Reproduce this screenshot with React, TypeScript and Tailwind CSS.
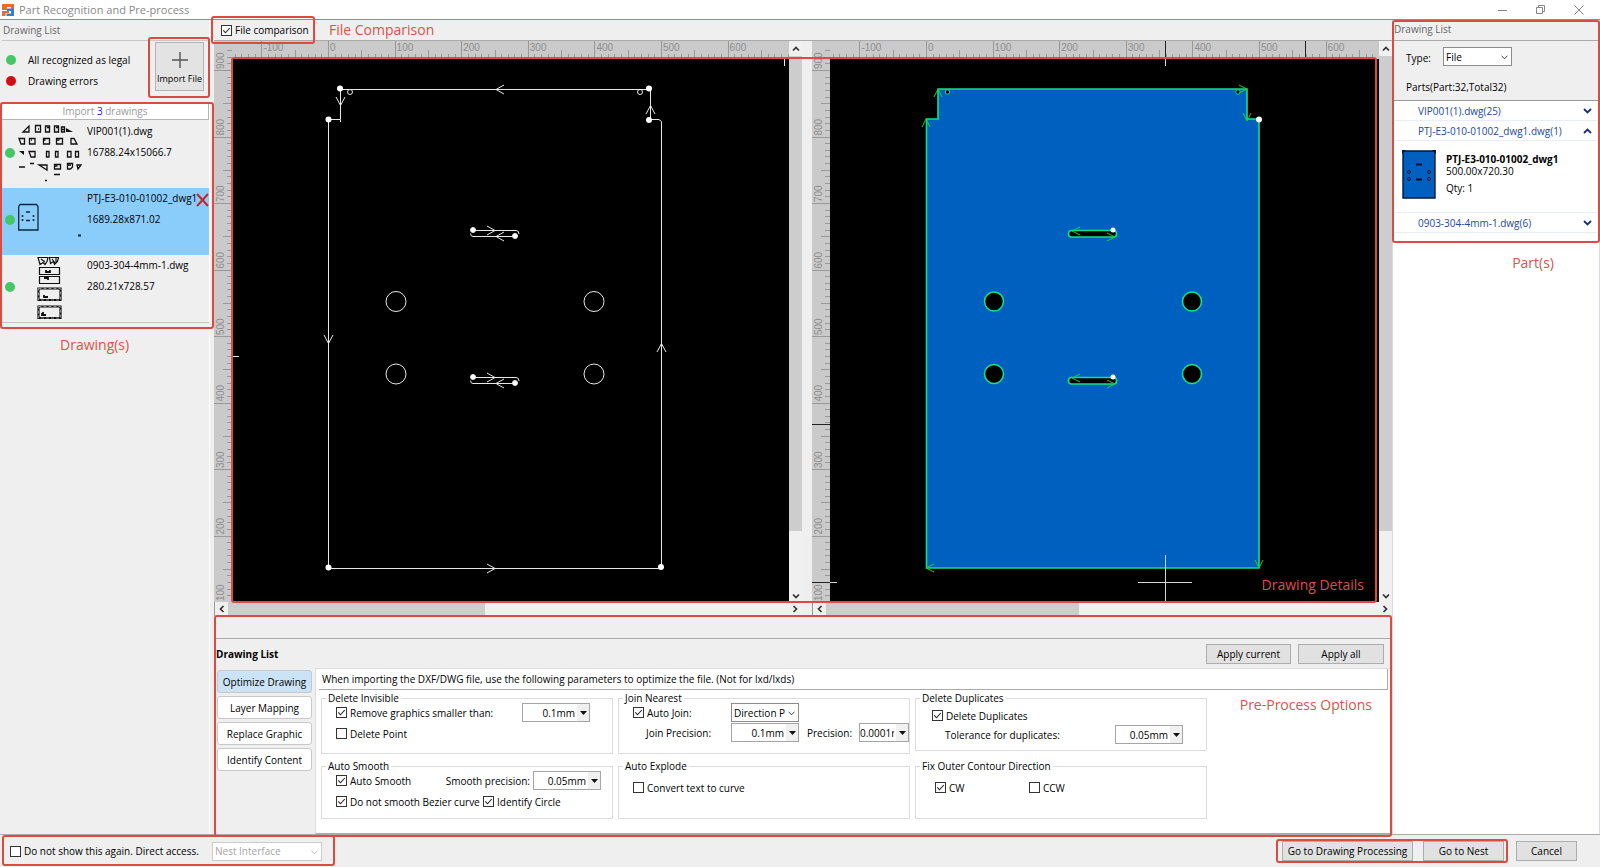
import type { ReactNode } from 'react';
import { useId, useState } from 'react';

const TICK_STEP = 66.6;

const tabs = ['Optimize Drawing', 'Layer Mapping', 'Replace Graphic', 'Identify Content'];

const drawings = [
  { name: 'VIP001(1).dwg', size: '16788.24x15066.7', thumb: <VipThumb /> },
  { name: 'PTJ-E3-010-01002_dwg1', size: '1689.28x871.02', thumb: <PlateThumb />, selected: true },
  { name: '0903-304-4mm-1.dwg', size: '280.21x728.57', thumb: <SheetThumb /> },
];

/* ---------- small controls ---------- */

function Frame({ className }: { className: string }) {
  return <div className={`pointer-events-none absolute z-20 rounded-[3px] border-2 border-[#dc4b41] ${className}`} />;
}

function Note({ className, children }: { className: string; children: ReactNode }) {
  return <span className={`absolute z-10 text-sm leading-5 whitespace-nowrap text-[#d9534a] ${className}`}>{children}</span>;
}

function Check({ label, checked = false, className = '' }: { label: string; checked?: boolean; className?: string }) {
  const id = useId();
  return (
    <span className={`flex items-center gap-[3px] whitespace-nowrap ${className}`}>
      <span className="relative flex">
        <input
          id={id}
          type="checkbox"
          defaultChecked={checked}
          className="peer size-[11px] appearance-none border border-[#333] bg-white"
        />
        <svg viewBox="0 0 11 11" className="pointer-events-none absolute inset-0 hidden size-[11px] peer-checked:block">
          <path d="M2.3 5.4 4.5 7.8 8.8 3" fill="none" stroke="#222" strokeWidth="1.1" />
        </svg>
      </span>
      <label htmlFor={id}>{label}</label>
    </span>
  );
}

function Combo({ value, label, className = '' }: { value: string; label: string; className?: string }) {
  return (
    <span className={`relative flex h-[19px] ${className}`}>
      <select
        aria-label={label}
        className="h-full w-full appearance-none border border-[#a5a5a5] bg-white pr-[14px] text-right leading-4"
      >
        <option>{value}</option>
      </select>
      <span className="pointer-events-none absolute inset-y-px right-px flex w-[12px] items-center justify-center bg-[#f0f0f0]">
        <svg width="7" height="4" viewBox="0 0 7 4">
          <path d="M0 0h7L3.5 4z" fill="#111" />
        </svg>
      </span>
    </span>
  );
}

function DropDown({
  id,
  value,
  label,
  disabled = false,
  className = '',
}: {
  id?: string;
  value: string;
  label?: string;
  disabled?: boolean;
  className?: string;
}) {
  return (
    <span className={`relative flex h-[19px] ${className}`}>
      <select
        id={id}
        aria-label={label}
        disabled={disabled}
        className="h-full w-full appearance-none border border-[#8c8c8c] bg-white pl-[2px] leading-4 disabled:border-[#ccc] disabled:text-[#a5a5a5] disabled:opacity-100"
      >
        <option>{value}</option>
      </select>
      <svg
        width="7"
        height="5"
        viewBox="0 0 7 5"
        className={`pointer-events-none absolute top-[8px] right-[4px] ${disabled ? 'text-[#bbb]' : 'text-[#444]'}`}
      >
        <path d="M.5.7 3.5 3.8 6.5.7" fill="none" stroke="currentColor" />
      </svg>
    </span>
  );
}

function PushButton({ children, className = '' }: { children: ReactNode; className?: string }) {
  return (
    <button type="button" className={`h-5 border border-[#adadad] bg-[#e1e1e1] text-center leading-4 whitespace-nowrap ${className}`}>
      {children}
    </button>
  );
}

function Group({ title, className = '', children }: { title: string; className?: string; children: ReactNode }) {
  return (
    <fieldset className={`border border-[#dcdcdc] ${className}`}>
      <legend className="ml-1 h-[10px] px-[2px] leading-[10px]">{title}</legend>
      {children}
    </fieldset>
  );
}

/* ---------- thumbnails ---------- */

function VipThumb() {
  return (
    <svg width="64" height="60" fill="none" stroke="#111" strokeWidth="1.3">
      <path d="M5 9h6V3zM17.500 2.500h5V9h-5zM27.500 3h4v6h-4zM36.500 3h4v6h-4zM43.500 4h3v5h-3z" />
      <path d="M20 6h1M29 4.500h2M38 4.500h2M43 6.500h4" />
      <path d="M48 5v4h7z" fill="#111" stroke="none" />
      <path d="M1 15.500h5.500V21H3zM11.500 15.500h5.500V21h-5.500zM25.500 15.500h6V21h-6zM38.500 15.500h6V21h-6zM53 15.500h3l3 5.500h-6z" />
      <path d="M25.500 17h2M38.500 17h3M13 17h1" />
      <path d="M1 28h5v4z" fill="#111" stroke="none" />
      <path d="M11 28.500h6V34h-4zM28.500 28.500h2.500V34h-2.500zM37.500 28.500h2.500V34h-2.500zM49.500 28.500h3.500V34h-3.500zM57.500 28.500h3V34h-3z" />
      <path d="M1 44h6M12 40.500h4M21 42h8v5zM36.500 41.500h6V46h-6zM49.500 40.500h5V44l-2 2h-3zM59 42h4l-3 4zM36 51.500h6" />
      <path d="M36.500 43h3M50 42h3M27 57.500h2" />
    </svg>
  );
}

function PlateThumb() {
  return (
    <svg width="64" height="60" fill="none" stroke="#0d2740" strokeWidth="1.3">
      <path d="M2 14.500h16.500l1.500 2V40H.7V16.500z" />
      <path d="M8 22h4M8 30.500h4M4.500 25v2M4.500 29v2M15.500 25v2M15.500 29v2" strokeWidth="1.6" />
      <path d="M60 45.500h3" strokeWidth="2" />
    </svg>
  );
}

function SheetThumb() {
  return (
    <svg width="64" height="64" fill="none" stroke="#111" strokeWidth="1.2">
      <path d="M20 .5h10l-1 4-2 3-2-2-3 2zM31.500.5h9l-1 4-3 3-1-3-3 2zM23 2l4 3M34 2l3 4M38 1v5" />
      <path d="M21.500 10.500h20v7h-20zM21.500 19.500h20v7h-20z" />
      <path d="M28 13v2h4v-2M26 21h4v2" strokeWidth="1.800" />
      <path d="M20.500 31.500h22v11.500h-22zM20.500 49.500h22V61h-22z" strokeWidth="2.200" />
      <path d="M20.500 31.500h22v11.500h-22zM20.500 49.500h22V61h-22z" stroke="#bbb" strokeWidth=".7" strokeDasharray="3 2" />
      <path d="M26 38v2h4M24 56v2h4M25 55v4" strokeWidth="1.800" />
    </svg>
  );
}

/* ---------- viewer ---------- */

function TopRuler({ zero, marks = [] }: { zero: number; marks?: number[] }) {
  const ticks = Array.from({ length: 84 }, (_, i) => i - 14);
  return (
    <svg className="h-[18px] w-full bg-[#cacaca] font-['Liberation_Sans',sans-serif] text-[10px]" stroke="#999">
      {ticks.map((t) => {
        const x = Math.round(zero + (t * TICK_STEP) / 10) + 0.5;
        const top = t % 10 === 0 ? 0 : t % 5 === 0 ? 9 : 13;
        return <path key={t} d={`M${x} ${top}V18`} />;
      })}
      {[-100, 0, 100, 200, 300, 400, 500, 600].map((n) => (
        <text key={n} x={zero + (n * TICK_STEP) / 100 + 2} y="10" fill="#8e8e8e" stroke="none">
          {n}
        </text>
      ))}
      {marks.map((x) => (
        <path key={x} d={`M${x} 0V18`} stroke="#222" />
      ))}
    </svg>
  );
}

function SideRuler({ marks = [] }: { marks?: number[] }) {
  const ticks = Array.from({ length: 84 }, (_, i) => i - 3);
  return (
    <svg className="w-[18px] shrink-0 self-stretch bg-[#cacaca] font-['Liberation_Sans',sans-serif] text-[10px]" stroke="#999">
      {ticks.map((t) => {
        const y = Math.round(29 + (t * 66.5) / 10) + 0.5;
        const left = t % 10 === 0 ? 0 : t % 5 === 0 ? 9 : 13;
        return <path key={t} d={`M${left} ${y}H18`} />;
      })}
      {[900, 800, 700, 600, 500, 400, 300, 200, 100].map((n, i) => (
        <text key={n} transform={`translate(10 ${28 + i * 66.5}) rotate(-90)`} fill="#8e8e8e" stroke="none">
          {n}
        </text>
      ))}
      {marks.map((y) => (
        <path key={y} d={`M0 ${y}H18`} stroke="#222" />
      ))}
    </svg>
  );
}

function ScrollArrow({ d, label, className }: { d: string; label: string; className: string }) {
  return (
    <button type="button" aria-label={label} className={`flex shrink-0 items-center justify-center ${className}`}>
      <svg width="8" height="8" viewBox="0 0 8 8">
        <path d={d} fill="none" stroke="#333" strokeWidth="1.7" />
      </svg>
    </button>
  );
}

function Viewer({
  zero,
  topMarks,
  sideMarks,
  children,
}: {
  zero: number;
  topMarks?: number[];
  sideMarks?: number[];
  children: ReactNode;
}) {
  return (
    <div className="flex min-w-0 flex-col">
      <div className="flex min-h-[400px] flex-1">
        <SideRuler marks={sideMarks} />
        <div className="flex min-w-0 flex-1 flex-col">
          <TopRuler zero={zero} marks={topMarks} />
          <svg className="w-full flex-1 bg-black">{children}</svg>
        </div>
        <div className="flex w-[13px] flex-col bg-[#f0f0f0]">
          <ScrollArrow label="Scroll up" d="M1 5.500 4 2.500 7 5.500" className="h-[15px]" />
          <div className="flex-1">
            <div className="h-[89%] bg-[#cdcdcd]" />
          </div>
          <ScrollArrow label="Scroll down" d="M1 2.500 4 5.500 7 2.500" className="h-[12px]" />
        </div>
      </div>
      <div className="flex h-[14px] border-l border-[#999] bg-[#f0f0f0]">
        <ScrollArrow label="Scroll left" d="M5.500 1 2.500 4 5.500 7" className="w-[13px]" />
        <div className="flex-1">
          <div className="h-full w-[46%] bg-[#cdcdcd]" />
        </div>
        <ScrollArrow label="Scroll right" d="M2.500 1 5.500 4 2.500 7" className="w-[15px]" />
      </div>
    </div>
  );
}

function RawDrawing() {
  return (
    <g fill="none" stroke="#e8e8e8">
      <path d="M96.500 509V60.500H108.500V63M108.500 60V30.500H418.500V60.500H427l2.500 2V509.500H96.500" />
      <path d="M272 26l-8 4.500 8 4.500M104 38l4.500 8.500L113 38M414 55l4.500-8.500L423 55M92 276l4.500 8.500L101 276M425 293l4.500-8.500L434 293M255 505l8 4.500-8 4.500" />
      {[242.5, 315].map((y) => (
        <g key={y}>
          <circle cx="164" cy={y} r="10" />
          <circle cx="362" cy={y} r="10" />
        </g>
      ))}
      {[0, 147].map((dy) => (
        <g key={dy} transform={`translate(0 ${dy})`}>
          <path d="M241 171.500H284q3 0 3 3.500M284 177.500H241q-2.500 0-2.500-3" />
          <path d="M255 167l8 4.500-8 4.500M272 173l-8 4.500 8 4.500" />
          <circle cx="241" cy="171" r="2.500" fill="#fff" />
          <circle cx="283" cy="177" r="2.500" fill="#fff" />
        </g>
      ))}
      <circle cx="118" cy="33" r="2.500" />
      <circle cx="408" cy="33" r="2.500" />
      {[
        [108, 29.5],
        [96.5, 60.5],
        [417, 29.5],
        [417, 61],
        [96.5, 508.5],
        [429, 508],
      ].map(([cx, cy]) => (
        <circle key={`${cx}-${cy}`} cx={cx} cy={cy} r="3" fill="#fff" stroke="none" />
      ))}
      <path d="M552.500 0V7M0 297.500H7" />
    </g>
  );
}

function PartDrawing() {
  return (
    <g fill="none" stroke="#12e08a" strokeWidth="1.600">
      <path d="M96.500 509V60H108V30H417V60H429V509z" fill="#0060c0" />
      <g fill="#000">
        {[242.5, 315].map((y) => (
          <g key={y}>
            <circle cx="164" cy={y} r="9.500" />
            <circle cx="362" cy={y} r="9.500" />
          </g>
        ))}
        <circle cx="117.500" cy="33" r="2.200" strokeWidth="1" />
        <circle cx="408" cy="33" r="2.200" strokeWidth="1" />
      </g>
      {[0, 147].map((dy) => (
        <g key={dy} transform={`translate(0 ${dy})`}>
          <rect x="238.500" y="171.500" width="48" height="6.500" rx="3" fill="#000" />
          <path d="M250 168l-8 4 8 4M277 174l8 4-8 4" stroke="#22d32a" strokeWidth="1" />
          <circle cx="283" cy="171" r="2.500" fill="#fff" stroke="none" />
        </g>
      ))}
      <path
        d="M92 68l4-8 4 8M104 38l4-8 4 8M409 26l8 4-8 4M413 54l4 8 4-8M425 501l4 8 4-8M104 505l-8 4 8 4"
        stroke="#22d32a"
        strokeWidth="1"
      />
      <circle cx="429" cy="60.500" r="3" fill="#fff" stroke="none" />
      <path d="M335.500 496V543M308 523.500H362M335.500 0V7M0 523.500H7" stroke="#d5d5d5" strokeWidth="1" />
    </g>
  );
}

/* ---------- page parts ---------- */

function TitleBar() {
  return (
    <header className="flex h-5 items-center border-b border-[#5b9bc4] bg-white pr-4 pl-[2px]">
      <svg width="12" height="12" viewBox="0 0 12 12">
        <path d="M0 0h12v5H9V3H5v3H0z" fill="#f0682c" />
        <path d="M0 7h7v2H3.500v3H0z" fill="#f0682c" />
        <path d="M5 4.500h7V12H4.500V9.500H9V7H5z" fill="#2a86cc" />
      </svg>
      <h1 className="ml-[5px] flex-1 text-[11px] text-[#888]">Part Recognition and Pre-process</h1>
      <div className="flex gap-[28px]">
        <button type="button" aria-label="Minimize">
          <svg width="10" height="10" stroke="#888">
            <path d="M0 5.500h9" />
          </svg>
        </button>
        <button type="button" aria-label="Restore">
          <svg width="10" height="10" fill="none" stroke="#888">
            <path d="M.5 2.500h6v6h-6zM2.500 2V.5h6v6H7" />
          </svg>
        </button>
        <button type="button" aria-label="Close">
          <svg width="10" height="10" stroke="#888">
            <path d="M.5.5l9 9M9.500.5l-9 9" />
          </svg>
        </button>
      </div>
    </header>
  );
}

function DrawingSidebar() {
  return (
    <aside className="relative flex w-[210px] shrink-0 flex-col border-r border-white pl-[2px]">
      <h2 className="h-[21px] border-b border-[#c8c8c8] pl-px leading-5 text-[#666]">Drawing List</h2>
      <div className="relative flex h-[62px] justify-between">
        <ul className="pt-[8px] pl-1">
          <li className="flex h-[21px] items-center gap-3">
            <i className="size-[10px] rounded-full bg-[#45c766]" />
            All recognized as legal
          </li>
          <li className="flex h-[21px] items-center gap-3">
            <i className="size-[10px] rounded-full bg-[#d30d12]" />
            Drawing errors
          </li>
        </ul>
        <button
          type="button"
          className="mt-px mr-[5px] flex size-[49px] flex-col items-center justify-end border border-[#b4b4b4] bg-[#e3e3e3] pb-[4px] text-[9px] leading-[14px] whitespace-nowrap"
        >
          <svg width="16" height="16" stroke="#555" strokeWidth="1.400" className="mb-[4px]">
            <path d="M0 8h16M8 0v16" />
          </svg>
          Import File
        </button>
        <Frame className="-top-1 -right-px h-[61px] w-[62px]" />
      </div>
      <div className="h-[17px] border-r border-b border-[#b5b5b5] bg-white text-center leading-4 text-[#9a9a9a]">
        Import <span className="text-[#2424b8]">3</span> drawings
      </div>
      <ul className="border-b border-[#c4c4c4] pt-px">
        {drawings.map((d) => (
          <li key={d.name} className={`relative flex h-[67px] pl-[3px] ${d.selected ? 'bg-[#8acdfb]' : ''}`}>
            <i className="mt-[27px] size-[10px] shrink-0 rounded-full bg-[#45c766]" />
            <div className="ml-[3px] w-[67px] shrink-0 pt-[2px]">{d.thumb}</div>
            <div className="ml-[2px] whitespace-nowrap">
              <p className="h-[21px] leading-[21px]">{d.name}</p>
              <p className="h-[21px] leading-[21px]">{d.size}</p>
            </div>
            {d.selected && (
              <button type="button" aria-label="Remove drawing" className="absolute top-[5px] right-0">
                <svg width="13" height="14" stroke="#c92323" strokeWidth="2">
                  <path d="M1 1l11 12M12 1L1 13" />
                </svg>
              </button>
            )}
          </li>
        ))}
      </ul>
      <Frame className="top-[82px] -right-[5px] left-0 h-[227px]" />
      <Note className="top-[315px] left-[60px]">Drawing(s)</Note>
    </aside>
  );
}

function PartRow({ name, open = false }: { name: string; open?: boolean }) {
  return (
    <button
      type="button"
      aria-expanded={open}
      className="flex h-[20px] w-full items-center justify-between border-b border-[#e8eef5] pr-[7px] pl-[25px] text-[#24489c]"
    >
      {name}
      <svg width="9" height="6" viewBox="0 0 9 6" fill="none" stroke="#12307e" strokeWidth="1.800">
        <path d={open ? 'M1 5 4.500 1.500 8 5' : 'M1 1 4.500 4.500 8 1'} />
      </svg>
    </button>
  );
}

function PartSidebar() {
  return (
    <aside className="relative flex w-[208px] shrink-0 flex-col border-x border-[#d5dde2] bg-white">
      <div className="border-b border-[#999] bg-[#efefef]">
        <h2 className="h-[21px] border-b border-[#aaa] pl-px leading-[18px] text-[#666]">Drawing List</h2>
        <div className="flex items-center pt-[6px] pl-[13px]">
          <label htmlFor="part-type" className="w-[37px] pt-[3px]">
            Type:
          </label>
          <DropDown id="part-type" value="File" className="w-[69px]" />
        </div>
        <p className="pt-[13px] pb-[5px] pl-[13px] leading-4">Parts(Part:32,Total32)</p>
      </div>
      <PartRow name="VIP001(1).dwg(25)" />
      <PartRow name="PTJ-E3-010-01002_dwg1.dwg(1)" open />
      <div className="flex h-[72px] border-b border-[#e8eef5] pt-[9px] pl-[9px]">
        <svg width="34" height="49" viewBox="0 0 34 49">
          <path d="M1 1h32v47H1z" fill="#0060c0" stroke="#04183a" strokeWidth="1.400" />
          <path d="M0 0h4L0 4zM34 0h-4l4 4z" fill="#04183a" />
          <path d="M14 14.500h6M14 29.500h6" stroke="#021026" strokeWidth="2" />
          <g fill="none" stroke="#04183a">
            <circle cx="7" cy="22" r="1.500" />
            <circle cx="27" cy="22" r="1.500" />
            <circle cx="7" cy="29" r="1.500" />
            <circle cx="27" cy="29" r="1.500" />
          </g>
        </svg>
        <div className="ml-[10px] pt-[2px] whitespace-nowrap">
          <p className="leading-[14px] font-bold text-black">PTJ-E3-010-01002_dwg1</p>
          <p className="leading-[11px]">500.00x720.30</p>
          <p className="mt-[3px] leading-4">Qty: 1</p>
        </div>
      </div>
      <PartRow name="0903-304-4mm-1.dwg(6)" />
      <Frame className="top-0 -right-px -left-px h-[223px]" />
      <Note className="top-[233px] right-[45px]">Part(s)</Note>
    </aside>
  );
}

function OptionsPanel() {
  const [tab, setTab] = useState(tabs[0]);
  return (
    <section className="relative bg-[#efefef]">
      <div className="h-[23px] border-b border-[#aaa]" />
      <div className="flex h-[29px] items-center gap-[7px] pr-[8px] pl-[2px]">
        <h2 className="flex-1 font-bold text-black">Drawing List</h2>
        <PushButton className="w-[85px]">Apply current</PushButton>
        <PushButton className="w-[86px]">Apply all</PushButton>
      </div>
      <div className="flex">
        <nav className="flex w-[101px] flex-col gap-[3px] pt-[2px] pl-[3px]">
          {tabs.map((t) => (
            <button
              key={t}
              type="button"
              onClick={() => setTab(t)}
              className={`h-[23px] w-[95px] rounded-[3px] border border-[#c8c8c8] leading-4 whitespace-nowrap ${
                t === tab ? 'bg-[#cbe3f6]' : 'bg-white'
              }`}
            >
              {t}
            </button>
          ))}
        </nav>
        <div className="h-[166px] flex-1 border-t border-b border-l border-t-[#dcdcdc] border-b-[#aaa] border-l-[#dcdcdc] bg-white">
          <p className="mr-[4px] ml-[3px] h-[21px] border-r border-b border-[#aaa] pl-[3px] leading-5">
            When importing the DXF/DWG file, use the following parameters to optimize the file. (Not for lxd/lxds)
          </p>
          <div className="mt-[3px] ml-[5px] grid max-w-[886px] grid-cols-3 gap-x-[5px] gap-y-[7px]">
            <Group title="Delete Invisible" className="h-[61px]">
              <div className="flex h-[19px] items-center justify-between pr-[22px] pl-[14px]">
                <Check label="Remove graphics smaller than:" checked />
                <Combo label="Minimum graphic size" value="0.1mm" className="w-[68px]" />
              </div>
              <Check label="Delete Point" className="mt-[2px] h-[19px] pl-[14px]" />
            </Group>
            <Group title="Join Nearest" className="h-[61px]">
              <div className="flex h-[19px] items-center pl-[14px]">
                <Check label="Auto Join:" checked className="w-[98px]" />
                <DropDown label="Join mode" value="Direction P" className="w-[68px]" />
              </div>
              <div className="mt-px flex h-[19px] items-center pl-[27px]">
                <span className="w-[85px]">Join Precision:</span>
                <Combo label="Join Precision" value="0.1mm" className="w-[68px]" />
                <span className="ml-[8px] flex-1">Precision:</span>
                <Combo label="Precision" value="0.0001r" className="w-[50px]" />
              </div>
            </Group>
            <Group title="Delete Duplicates" className="h-[58px]">
              <Check label="Delete Duplicates" checked className="mt-[3px] h-[19px] pl-[16px]" />
              <div className="flex h-[19px] items-center justify-between pr-[23px] pl-[29px]">
                <span>Tolerance for duplicates:</span>
                <Combo label="Tolerance for duplicates" value="0.05mm" className="w-[68px]" />
              </div>
            </Group>
            <Group title="Auto Smooth" className="h-[58px]">
              <div className="flex h-[19px] items-center pr-[11px] pl-[14px]">
                <Check label="Auto Smooth" checked className="flex-1" />
                <span>Smooth precision:</span>
                <Combo label="Smooth precision" value="0.05mm" className="ml-[3px] w-[68px]" />
              </div>
              <div className="mt-[2px] flex h-[19px] items-center pl-[14px]">
                <Check label="Do not smooth Bezier curve" checked className="w-[147px]" />
                <Check label="Identify Circle" checked />
              </div>
            </Group>
            <Group title="Auto Explode" className="h-[58px]">
              <Check label="Convert text to curve" className="mt-[7px] h-[19px] pl-[14px]" />
            </Group>
            <Group title="Fix Outer Contour Direction" className="h-[58px]">
              <div className="mt-[7px] flex h-[19px] items-center pl-[19px]">
                <Check label="CW" checked className="w-[94px]" />
                <Check label="CCW" />
              </div>
            </Group>
          </div>
        </div>
      </div>
      <Note className="top-[79px] right-[20px]">Pre-Process Options</Note>
      <Frame className="-top-px right-0 -bottom-[3px] left-0" />
    </section>
  );
}

export default function App() {
  return (
    <div className="flex min-h-screen flex-col bg-[#efefef] font-['Open_Sans','Noto_Sans',sans-serif] text-[10px] leading-4 text-black">
      <TitleBar />
      <div className="flex flex-1">
        <DrawingSidebar />
        <main className="flex min-w-0 flex-1 flex-col pl-1">
          <div className="relative flex h-[21px] items-center border-b border-[#aaa] pl-[7px]">
            <Check label="File comparison" checked />
            <Frame className="-top-1 -left-[3px] h-7 w-[104px]" />
            <Note className="top-0 left-[115px]">File Comparison</Note>
          </div>
          <div className="relative grid flex-1 grid-cols-[588fr_580fr] gap-x-[10px]">
            <Viewer zero={96}>
              <RawDrawing />
            </Viewer>
            <Viewer zero={96} topMarks={[335.5, 475.5]} sideMarks={[383.5, 541.5]}>
              <PartDrawing />
            </Viewer>
            <Frame className="top-4 right-[15px] bottom-[13px] left-[17px]" />
            <Note className="right-[28px] bottom-[21px]">Drawing Details</Note>
          </div>
          <OptionsPanel />
        </main>
        <PartSidebar />
      </div>
      <footer className="relative flex h-[33px] items-center border-t border-[#aaa] pr-[23px] pl-[10px]">
        <Check label="Do not show this again. Direct access." className="w-[202px]" />
        <DropDown label="Direct access target" value="Nest Interface" disabled className="w-[110px]" />
        <Frame className="top-0 left-[2px] h-[31px] w-[333px]" />
        <div className="relative ml-auto flex gap-[10px]">
          <PushButton className="w-[131px]">Go to Drawing Processing</PushButton>
          <PushButton className="w-[81px]">Go to Nest</PushButton>
          <Frame className="-top-[2px] -right-1 -bottom-[2px] -left-[6px]" />
        </div>
        <PushButton className="ml-[12px] w-[61px]">Cancel</PushButton>
      </footer>
    </div>
  );
}
